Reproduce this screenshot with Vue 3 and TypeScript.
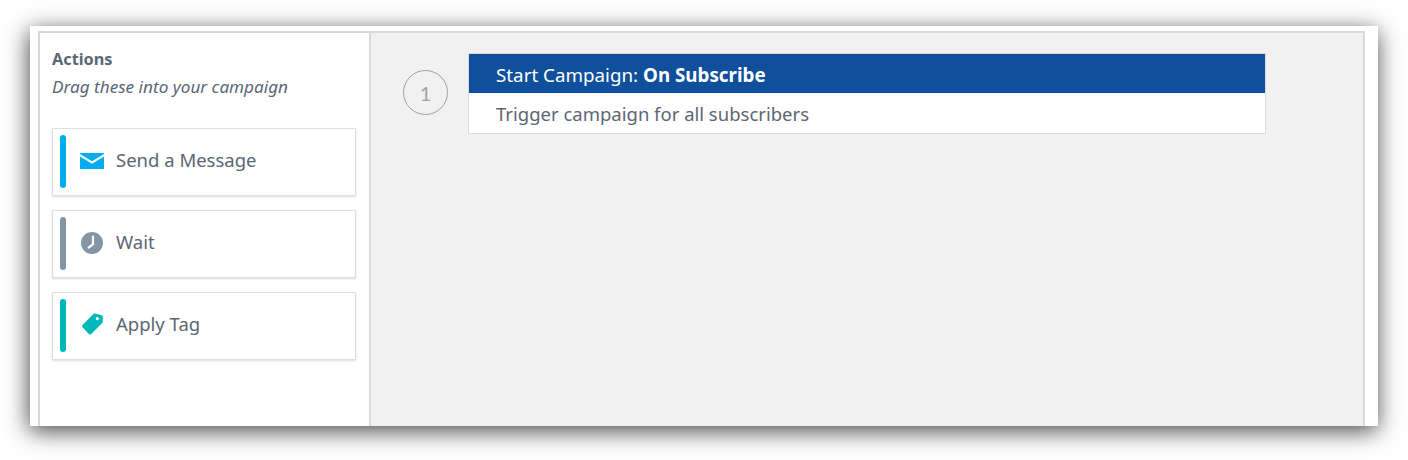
<template>
  <div class="page">
    <div class="window">
      <div class="frame">
        <aside class="sidebar">
          <h3 class="sidebar__title">Actions</h3>
          <p class="sidebar__hint">Drag these into your campaign</p>
          <div class="action-list">
            <div v-for="action in actions" :key="action.label" class="action">
              <span class="action__stripe" :style="{ background: action.color }"></span>
              <span class="action__icon">
                <svg v-if="action.icon === 'mail'" width="24" height="16" viewBox="0 0 24 16">
                  <path :fill="action.color" d="M0 0 H24 V1 L12 8.2 L0 1 Z" />
                  <path :fill="action.color" d="M0 3.6 L12 10.8 L24 3.6 V16 H0 Z" />
                </svg>
                <svg v-else-if="action.icon === 'clock'" width="22" height="22" viewBox="0 0 22 22">
                  <circle cx="11" cy="11" r="11" :fill="action.color" />
                  <path d="M12 4.5 V12.2 L7.6 15.6" fill="none" stroke="#fff" stroke-width="2.2" stroke-linecap="round" stroke-linejoin="round" />
                </svg>
                <svg v-else width="24" height="24" viewBox="0 0 24 24">
                  <path :fill="action.color" fill-rule="evenodd" d="M2.5 12 L13.2 1.2 Q14 0.4 15 0.6 L21.6 2.2 Q22.8 2.5 22.8 3.7 L22.8 8.6 Q22.8 9.4 22.2 10 L11 21.2 Q10 22 9 21.2 L2.5 14.2 Q1.5 13 2.5 12 Z M17.3 4.1 A1.6 1.6 0 1 0 17.3 7.3 A1.6 1.6 0 1 0 17.3 4.1 Z" />
                </svg>
              </span>
              <span class="action__label">{{ action.label }}</span>
            </div>
          </div>
        </aside>
        <main class="canvas">
          <div class="step-number">1</div>
          <div class="step">
            <div class="step__head">Start Campaign: <strong>On Subscribe</strong></div>
            <div class="step__body">Trigger campaign for all subscribers</div>
          </div>
        </main>
      </div>
    </div>
  </div>
</template>

<script setup lang="ts">
interface Action {
  label: string;
  color: string;
  icon: "mail" | "clock" | "tag";
}

const actions: Action[] = [
  { label: "Send a Message", color: "#00aeef", icon: "mail" },
  { label: "Wait", color: "#8496a6", icon: "clock" },
  { label: "Apply Tag", color: "#00b8b8", icon: "tag" },
];
</script>

<style>
html,
body {
  margin: 0;
  background: #fff;
  overflow: hidden;
}
</style>

<style scoped>
.page {
  width: 1408px;
  height: 460px;
  padding: 26px 30px 34px;
  box-sizing: border-box;
  font-family: "Noto Sans", "Open Sans", sans-serif;
  color: #5b6773;
}

.window {
  height: 400px;
  padding: 5px 13px 0 8px;
  box-sizing: border-box;
  background: #fff;
  box-shadow: -1px 5px 22px rgba(0, 0, 0, 0.72);
}

.frame {
  display: flex;
  height: 100%;
  box-sizing: border-box;
  border: 2px solid #d8d8d8;
  border-bottom: 0;
}

.sidebar {
  width: 331px;
  flex: none;
  box-sizing: border-box;
  padding: 15px 12px 0;
  border-right: 2px solid #d8d8d8;
}

.sidebar__title {
  margin: 0;
  font-size: 16.3px;
  line-height: 22px;
  font-weight: 700;
}

.sidebar__hint {
  margin: 6px 0 0;
  font-size: 17.15px;
  line-height: 22px;
  font-style: italic;
}

.action-list {
  display: flex;
  flex-direction: column;
  gap: 14px;
  margin-top: 30px;
}

.action {
  display: flex;
  align-items: center;
  height: 68px;
  width: 304px;
  box-sizing: border-box;
  padding: 0 0 2px 7px;
  border: 1px solid #dedede;
  box-shadow: 0 1px 2px rgba(0, 0, 0, 0.14);
}

.action__stripe {
  width: 6px;
  height: 53px;
  border-radius: 3px;
}

.action__icon {
  display: flex;
  justify-content: center;
  align-items: center;
  width: 24px;
  margin-left: 14px;
}

.action__label {
  margin: 0 0 2px 12px;
  font-size: 18.5px;
  line-height: 24px;
}

.canvas {
  flex: 1;
  display: flex;
  align-items: flex-start;
  padding: 20px 0 0 32px;
  background: #f1f1f1;
}

.step-number {
  width: 45px;
  height: 45px;
  flex: none;
  margin-top: 17px;
  box-sizing: border-box;
  border: 1px solid #98a4ae;
  border-radius: 50%;
  display: flex;
  align-items: center;
  justify-content: center;
  font-family: "Lato", sans-serif;
  font-size: 20px;
  color: #98a4ae;
}

.step {
  width: 798px;
  margin-left: 20px;
  box-sizing: border-box;
  border: 1px solid #dcdcdc;
  background: #fff;
}

.step__head,
.step__body {
  height: 40px;
  padding-left: 27px;
  font-size: 18.5px;
  line-height: 42px;
}

.step__head {
  height: 39px;
  font-size: 18.8px;
  background: #0f4f9c;
  color: #fff;
}
</style>
